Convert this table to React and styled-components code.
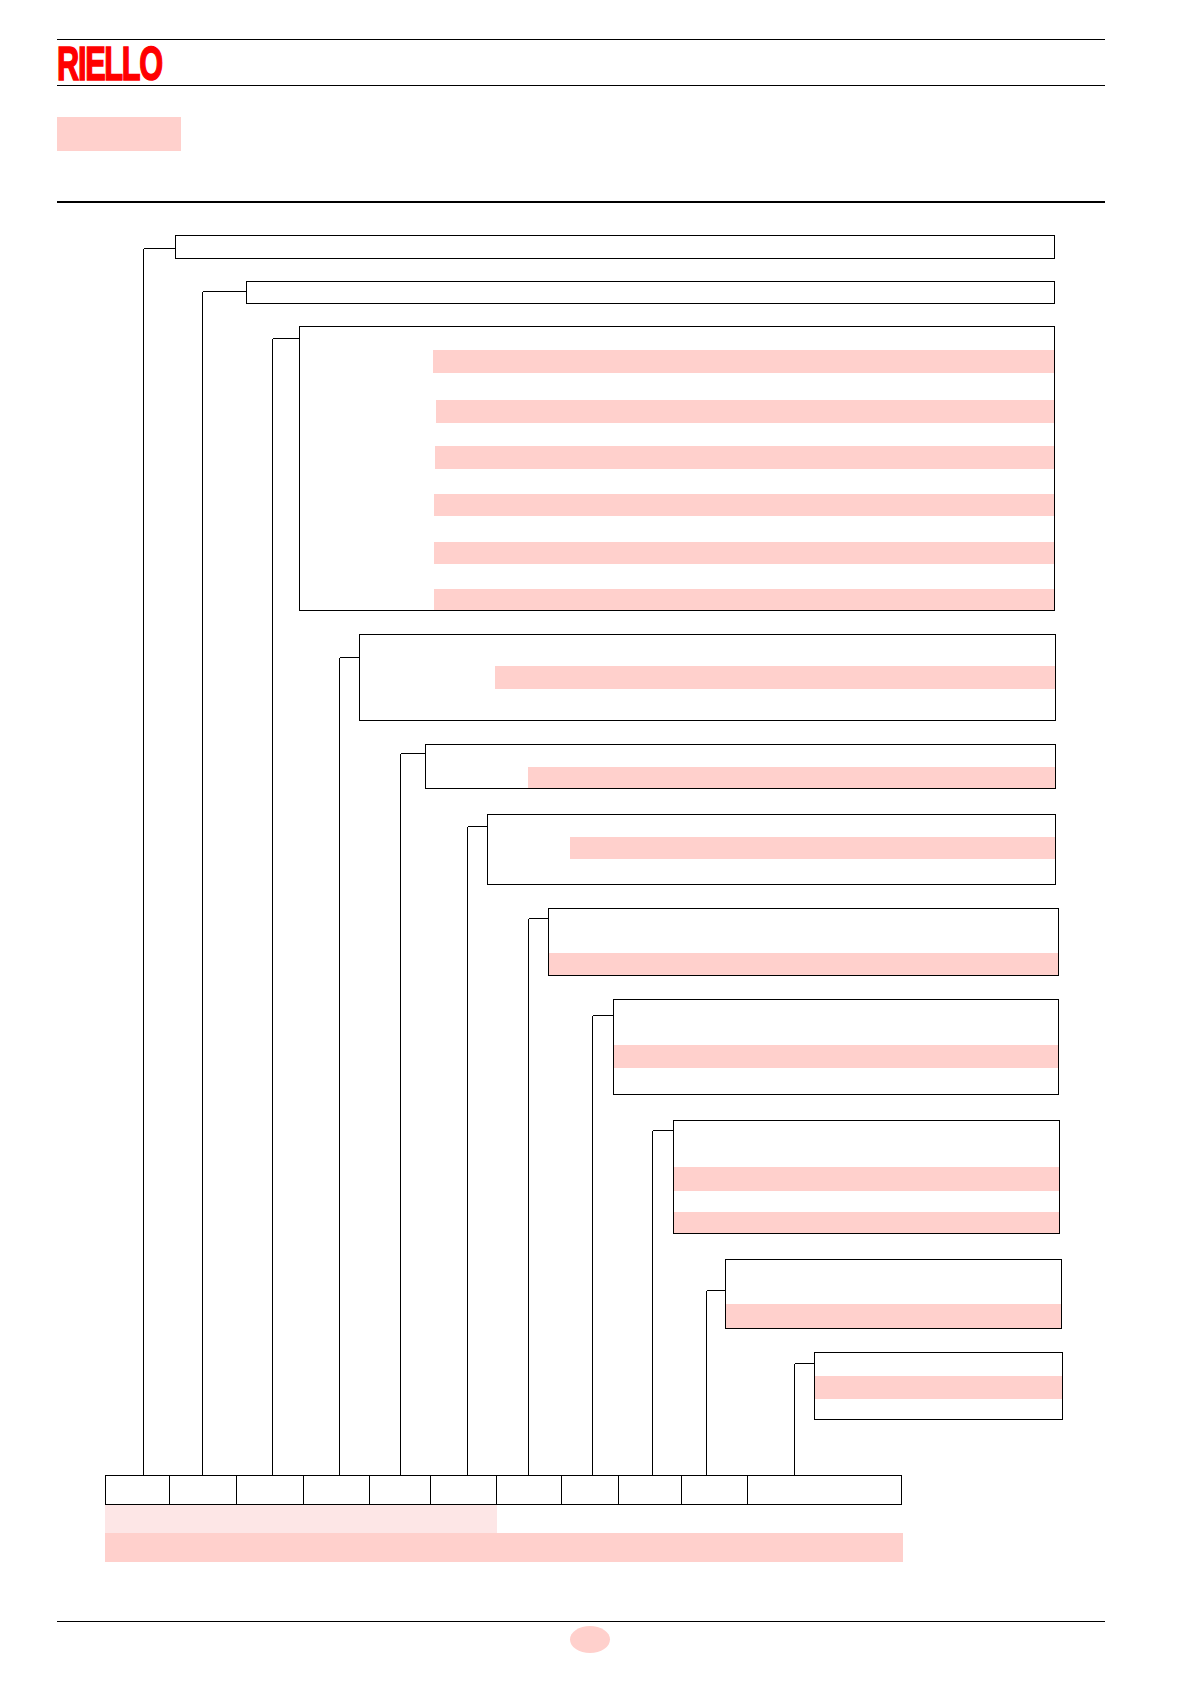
import React from 'react';
import styled, { createGlobalStyle } from 'styled-components';

const GlobalStyle = createGlobalStyle`
  html, body {
    margin: 0;
    padding: 0;
    background: #ffffff;
  }
  body {
    font-family: "Liberation Sans", Arial, sans-serif;
  }
  * {
    box-sizing: border-box;
  }
`;

const PINK = '#ffd0cc';
const PINK_LIGHT = '#fde6e6';

// page left edge is at x=57, diagram top at y=235
const ORIGIN_X = 57;
const ORIGIN_Y = 235;
const TABLE_TOP = 1475;

// each branch: connector (x, y), box left / right margin, gap above, rows inside the box
const branches = [
  { x: 143, y: 248, left: 175, right: 50, gap: 0, rows: [{ h: 22 }] },
  { x: 202, y: 291, left: 246, right: 50, gap: 22, rows: [{ h: 21 }] },
  {
    x: 272, y: 338, left: 299, right: 50, gap: 22,
    rows: [
      { h: 23 }, { h: 23, pink: true, indent: 133 },
      { h: 27 }, { h: 23, pink: true, indent: 136 },
      { h: 23 }, { h: 23, pink: true, indent: 135 },
      { h: 25 }, { h: 22, pink: true, indent: 134 },
      { h: 26 }, { h: 22, pink: true, indent: 134 },
      { h: 25 }, { h: 21, pink: true, indent: 134 },
    ],
  },
  { x: 339, y: 657, left: 359, right: 49, gap: 23, rows: [{ h: 31 }, { h: 23, pink: true, indent: 135 }, { h: 31 }] },
  { x: 400, y: 753, left: 425, right: 49, gap: 23, rows: [{ h: 22 }, { h: 21, pink: true, indent: 102 }] },
  { x: 467, y: 826, left: 487, right: 49, gap: 25, rows: [{ h: 22 }, { h: 22, pink: true, indent: 82 }, { h: 25 }] },
  { x: 528, y: 918, left: 548, right: 46, gap: 23, rows: [{ h: 44 }, { h: 22, pink: true }] },
  { x: 592, y: 1015, left: 613, right: 46, gap: 23, rows: [{ h: 45 }, { h: 23, pink: true }, { h: 26 }] },
  { x: 652, y: 1130, left: 673, right: 45, gap: 25, rows: [{ h: 46 }, { h: 24, pink: true }, { h: 21 }, { h: 21, pink: true }] },
  { x: 706, y: 1290, left: 725, right: 43, gap: 25, rows: [{ h: 44 }, { h: 24, pink: true }] },
  { x: 794, y: 1363, left: 814, right: 42, gap: 23, rows: [{ h: 23 }, { h: 23, pink: true }, { h: 20 }] },
];

// divider positions of the code table
const cellEdges = [105, 169, 236, 303, 369, 430, 496, 561, 618, 681, 747, 901];

const Page = styled.div`
  width: 1191px;
  height: 1685px;
  padding: 39px 86px 0 57px;
  display: flex;
  flex-direction: column;
  background: #fff;
  overflow: hidden;
`;

const Header = styled.header`
  height: 47px;
  border-top: 1px solid #000;
  border-bottom: 1px solid #000;
  display: flex;
  align-items: flex-start;
`;

const Logo = styled.span`
  display: inline-block;
  font-family: "Liberation Sans", Arial, sans-serif;
  font-weight: 700;
  font-size: 48px;
  line-height: 1;
  letter-spacing: -2px;
  color: #ff0000;
  -webkit-text-stroke: 1.6px #ff0000;
  transform: scaleX(0.64);
  transform-origin: left top;
`;

const TitleTag = styled.div`
  width: 124px;
  height: 34px;
  margin-top: 31px;
  background: ${PINK};
`;

const Rule = styled.div`
  height: 2px;
  margin-top: 50px;
  background: #000;
`;

const Diagram = styled.section`
  position: relative;
  margin-top: 32px;
  display: flex;
  flex-direction: column;
`;

const Connectors = styled.svg`
  position: absolute;
  left: 0;
  top: 0;
  width: 100%;
  height: 100%;
  overflow: visible;
  pointer-events: none;
`;

const Box = styled.div`
  margin-top: ${(p) => p.$gap}px;
  margin-left: ${(p) => p.$left}px;
  margin-right: ${(p) => p.$right}px;
  border: 1px solid #000;
  display: flex;
  flex-direction: column;
  background: #fff;
`;

const Row = styled.div`
  height: ${(p) => p.$h}px;
  margin-left: ${(p) => p.$indent || 0}px;
  background: ${(p) => (p.$pink ? PINK : 'transparent')};
`;

const CodeTable = styled.div`
  margin-top: 55px;
  margin-left: 48px;
  width: 797px;
  height: 30px;
  border: 1px solid #000;
  display: flex;
`;

const Cell = styled.div`
  width: ${(p) => p.$w}px;
  flex: ${(p) => (p.$last ? 1 : 'none')};
  border-right: ${(p) => (p.$last ? 'none' : '1px solid #000')};
`;

const Band = styled.div`
  margin-left: 48px;
  width: ${(p) => p.$w}px;
  height: ${(p) => p.$h}px;
  background: ${(p) => p.$color};
`;

const Footer = styled.footer`
  margin-top: 59px;
  border-top: 1px solid #000;
  padding-top: 4px;
  display: flex;
`;

const PageBadge = styled.div`
  margin-left: 513px;
  width: 40px;
  height: 27px;
  border-radius: 50%;
  background: ${PINK};
`;

export default function App() {
  return (
    <>
      <GlobalStyle />
      <Page>
        <Header>
          <Logo>RIELLO</Logo>
        </Header>
        <TitleTag />
        <Rule />
        <Diagram>
          {branches.map((b, i) => (
            <Box key={i} $gap={b.gap} $left={b.left - ORIGIN_X} $right={b.right}>
              {b.rows.map((r, j) => (
                <Row key={j} $h={r.h} $pink={r.pink} $indent={r.indent} />
              ))}
            </Box>
          ))}

          <CodeTable>
            {cellEdges.slice(0, -1).map((edge, i) => (
              <Cell
                key={i}
                $w={cellEdges[i + 1] - edge}
                $last={i === cellEdges.length - 2}
              />
            ))}
          </CodeTable>
          <Band $w={392} $h={28} $color={PINK_LIGHT} />
          <Band $w={798} $h={29} $color={PINK} />

          <Connectors>
            {branches.map((b, i) => {
              const x = b.x - ORIGIN_X + 0.5;
              const y = b.y - ORIGIN_Y + 0.5;
              return (
                <g key={i} stroke="#000" strokeWidth="1" shapeRendering="crispEdges">
                  <line x1={x} y1={y} x2={b.left - ORIGIN_X} y2={y} />
                  <line x1={x} y1={y} x2={x} y2={TABLE_TOP - ORIGIN_Y} />
                </g>
              );
            })}
          </Connectors>
        </Diagram>
        <Footer>
          <PageBadge />
        </Footer>
      </Page>
    </>
  );
}
